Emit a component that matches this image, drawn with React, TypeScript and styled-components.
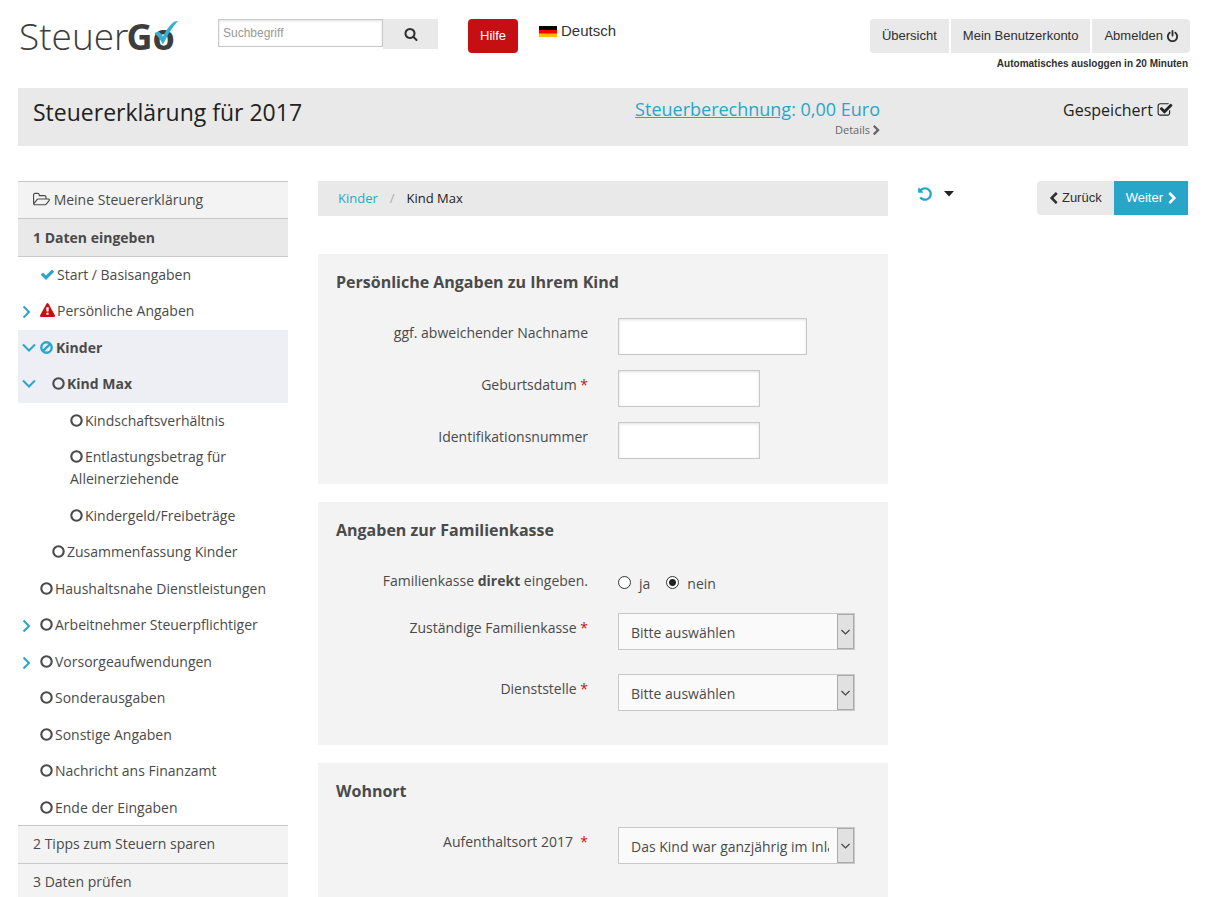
import React from 'react';
import styled, { createGlobalStyle, css } from 'styled-components';

const blue = '#2aa5ca';
const dark = '#2f2f2f';
const text = '#4a4a4a';
const sans = '"Liberation Sans", Arial, sans-serif';
const open = '"Open Sans", sans-serif';

const GlobalStyle = createGlobalStyle`
  *, *::before, *::after { box-sizing: border-box; }
  body { margin: 0; background: #fff; color: ${text}; font: 14px/22px ${open}; }
  a { color: inherit; text-decoration: none; }
  button, input, select { font: inherit; color: inherit; margin: 0; }
  ul, ol { list-style: none; margin: 0; padding: 0; }
  h1, h2, p { margin: 0; }
`;

/* ---------- icons ---------- */

const paths = {
  search: 'M1216 832q0-185-131.5-316.5t-316.5-131.5-316.5 131.5-131.5 316.5 131.5 316.5 316.5 131.5 316.5-131.5 131.5-316.5zm512 832q0 52-38 90t-90 38q-54 0-90-38l-343-342q-179 124-399 124-143 0-273.5-55.5t-225-150-150-225-55.5-273.5 55.5-273.5 150-225 225-150 273.5-55.5 273.5 55.5 225 150 150 225 55.5 273.5q0 220-124 399l343 343q37 37 37 90z',
  check: 'M1671 566q0 40-28 68l-724 724-136 136q-28 28-68 28t-68-28l-136-136-362-362q-28-28-28-68t28-68l136-136q28-28 68-28t68 28l294 295 656-657q28-28 68-28t68 28l136 136q28 28 28 68z',
  saved: 'M1472 930v318q0 119-84.5 203.5t-203.5 84.5h-832q-119 0-203.5-84.5t-84.5-203.5v-832q0-119 84.5-203.5t203.5-84.5h832q63 0 117 25 15 7 18 23 3 17-9 29l-49 49q-10 10-23 10-3 0-9-2-23-6-45-6h-832q-66 0-113 47t-47 113v832q0 66 47 113t113 47h832q66 0 113-47t47-113v-254q0-13 9-22l64-64q10-10 23-10 6 0 12 3 20 8 20 29zm231-489l-814 814q-24 24-57 24t-57-24l-430-430q-24-24-24-57t24-57l110-110q24-24 57-24t57 24l263 263 647-647q24-24 57-24t57 24l110 110q24 24 24 57t-24 57z',
  undo: 'M1664 896q0 156-61 298t-164 245-245 164-298 61q-172 0-327-72.5t-264-204.5q-7-10-6.5-22.5t8.5-20.5l137-138q10-9 25-9 16 2 23 12 73 95 179 147t225 52q104 0 198.5-40.5t163.5-109.5 109.5-163.5 40.5-198.5-40.5-198.5-109.5-163.5-163.5-109.5-198.5-40.5q-98 0-188 35.5t-160 101.5l137 138q31 30 14 69-17 40-59 40h-448q-26 0-45-19t-19-45v-448q0-42 40-59 39-17 69 14l130 129q107-101 244.5-156.5t284.5-55.5q156 0 298 61t245 164 164 245 61 298z',
  power: 'M1664 896q0 156-61 298t-164 245-245 164-298 61-298-61-245-164-164-245-61-298q0-182 80.5-343t226.5-270q43-32 95.5-25t83.5 50q32 42 24.5 94.5t-49.5 84.5q-98 74-151.5 181t-53.5 228q0 104 40.5 198.5t109.5 163.5 163.5 109.5 198.5 40.5 198.5-40.5 163.5-109.5 109.5-163.5 40.5-198.5q0-121-53.5-228t-151.5-181q-42-32-49.5-84.5t24.5-94.5q31-43 84-50t95 25q146 109 226.5 270t80.5 343zm-640-768v640q0 52-38 90t-90 38-90-38-38-90v-640q0-52 38-90t90-38 90 38 38 90z',
  warning: 'M1024 1375v-190q0-14-9.5-23.5t-22.5-9.5h-192q-13 0-22.5 9.5t-9.5 23.5v190q0 14 9.5 23.5t22.5 9.5h192q13 0 22.5-9.5t9.5-23.5zm-2-374l18-459q0-12-10-19-13-11-24-11h-220q-11 0-24 11-10 7-10 21l17 457q0 10 10 16.5t24 6.5h185q14 0 23.5-6.5t10.5-16.5zm-14-934l768 1408q35 63-2 126-17 29-46.5 46t-63.5 17h-1536q-34 0-63.5-17t-46.5-46q-37-63-2-126l768-1408q17-31 47-49t65-18 65 18 47 49z',
  right: 'M1363 877l-742 742q-19 19-45 19t-45-19l-166-166q-19-19-19-45t19-45l531-531-531-531q-19-19-19-45t19-45l166-166q19-19 45-19t45 19l742 742q19 19 19 45t-19 45z',
  left: 'M1427 301l-531 531 531 531q19 19 19 45t-19 45l-166 166q-19 19-45 19t-45-19l-742-742q-19-19-19-45t19-45l742-742q19-19 45-19t45 19l166 166q19 19 19 45t-19 45z',
  folder: 'M1781 1000q0-35-53-35h-1088q-40 0-85.5 21.5t-71.5 52.5l-294 363q-18 24-18 40 0 35 53 35h1088q40 0 86-22t71-53l294-363q18-22 18-39zm-1141-163h768v-160q0-40-28-68t-68-28h-576q-40 0-68-28t-28-68v-64q0-40-28-68t-68-28h-320q-40 0-68 28t-28 68v853l256-315q44-53 116-87.5t140-34.5zm1269 163q0 62-46 120l-295 363q-43 53-116 87.5t-140 34.5h-1088q-92 0-158-66t-66-158v-960q0-92 66-158t158-66h320q92 0 158 66t66 158v32h544q92 0 158 66t66 158v160h192q54 0 99 24.5t67 70.5q15 32 15 68z',
};

const Glyph = styled.svg`
  flex: none;
  fill: currentColor;
  vertical-align: -2px;
`;

type IconProps = { name: keyof typeof paths; size?: number; box?: string };

function Icon({ name, size = 14, box = '0 0 1792 1792' }: IconProps) {
  const [, , w, h] = box.split(' ').map(Number);
  return (
    <Glyph width={Math.round((size * w) / h)} height={size} viewBox={box} aria-hidden="true">
      <path d={paths[name]} />
    </Glyph>
  );
}

const StrokeGlyph = styled.svg`
  flex: none;
  fill: none;
  stroke: currentColor;
  vertical-align: -1px;
`;

const Ring = ({ barred = false }: { barred?: boolean }) => (
  <StrokeGlyph width="13" height="13" viewBox="0 0 13 13" strokeWidth={barred ? 2.4 : 2.1} aria-hidden="true">
    <circle cx="6.5" cy="6.5" r="5.2" />
    {barred && <path d="M2.8 10.2 10.2 2.8" />}
  </StrokeGlyph>
);

/* ---------- header ---------- */

const Page = styled.div`
  max-width: 1206px;
  margin: 0 auto;
  padding: 0 18px;
`;

const Header = styled.header`
  display: flex;
  align-items: flex-start;
  height: 88px;
  padding-top: 19px;
  color: ${dark};
  font: 13px/20px ${sans};
`;

const Logo = styled.a`
  position: relative;
  width: 200px;
  height: 36px;
  padding-left: 1px;
  color: #3e3d3d;
  font: 300 37px/34px ${open};
  b { margin-left: -2px; font-size: 36px; font-weight: 700; }
  svg { position: absolute; left: 136px; top: 2px; }
`;

const Search = styled.form`
  display: flex;
  align-items: flex-start;
`;

const SearchInput = styled.input`
  width: 165px;
  height: 28px;
  padding: 0 4px;
  border: 1px solid #c8c8c8;
  border-radius: 0;
  background: #fff;
  box-shadow: inset 0 1px 3px rgba(0, 0, 0, 0.12);
  font-size: 12px;
  &::placeholder { color: #999; opacity: 1; }
`;

const SearchButton = styled.button`
  width: 55px;
  height: 30px;
  padding: 2px 0 0;
  border: 0;
  background: #e9e9e9;
`;

const HelpButton = styled.button`
  height: 34px;
  margin-left: 30px;
  padding: 0 12px;
  border: 0;
  border-radius: 4px;
  background: #c60f13;
  color: #fff;
`;

const Language = styled.a`
  display: flex;
  align-items: center;
  gap: 4px;
  margin-left: 21px;
  padding-top: 2px;
  color: #333;
  font-size: 15px;
`;

const Account = styled.div`
  margin: 0 -2px 0 auto;
`;

const AccountNav = styled.nav`
  display: flex;
  gap: 2px;
  a {
    display: flex;
    align-items: center;
    gap: 3px;
    height: 34px;
    padding: 0 12px;
    background: #e9e9e9;
  }
  a:first-child { border-radius: 4px 0 0 4px; }
  a:last-child { padding-right: 11px; border-radius: 0 4px 4px 0; }
`;

const Logout = styled.p`
  padding: 1px 2px 0 0;
  text-align: right;
  font-size: 10px;
  font-weight: 700;
`;

/* ---------- title bar ---------- */

const TitleBar = styled.section`
  display: grid;
  grid-template-columns: minmax(0, 1fr) auto 293px;
  align-items: start;
  height: 58px;
  padding: 0 15px;
  background: #e9e9e9;
  color: #222;
`;

const Title = styled.h1`
  font-size: 23px;
  font-weight: 400;
  line-height: 48px;
`;

const Tax = styled.div`
  padding-top: 10px;
  color: ${blue};
  font-size: 18px;
  text-align: right;
  a:first-child { text-decoration: underline; }
`;

const Details = styled.a`
  display: flex;
  justify-content: flex-end;
  align-items: center;
  gap: 1px;
  margin-right: -2px;
  color: #666;
  font-size: 11px;
  line-height: 20px;
`;

const Saved = styled.p`
  padding-top: 11px;
  font-size: 16px;
  text-align: right;
`;

/* ---------- columns ---------- */

const Columns = styled.div`
  display: grid;
  grid-template-columns: 270px minmax(0, 1fr) 270px;
  gap: 30px;
  align-items: start;
  padding-top: 35px;
`;

const Section = styled.a<{ $active?: boolean; $first?: boolean }>`
  display: block;
  padding: 7px 15px ${p => (p.$first ? 7 : 8)}px;
  border-top: 1px solid #c8c8c8;
  background: #f3f3f3;
  ${p => p.$active && css`
    padding: 8px 15px 7px;
    border-bottom: 1px solid #c8c8c8;
    background: #e9e9e9;
    font-weight: 700;
  `}
`;

const indents = [22, 34, 52];

const Item = styled.li<{ $level: number; $active?: boolean }>`
  position: relative;
  padding: 7px 15px 7px ${p => indents[p.$level]}px;
  ${p => p.$active && css`
    background: #edeff4;
    font-weight: 700;
  `}
  &:nth-child(even) { padding-bottom: 8px; }
  &:last-child { padding-bottom: 6px; }
`;

const Toggle = styled.button`
  position: absolute;
  left: 4px;
  top: 11px;
  display: flex;
  padding: 0;
  border: 0;
  background: none;
  color: ${blue};
`;

const Mark = styled.span<{ $color?: string; $gap: number }>`
  margin-right: ${p => p.$gap}px;
  color: ${p => p.$color ?? 'inherit'};
`;

/* ---------- form ---------- */

const Breadcrumb = styled.nav`
  margin-bottom: 38px;
  padding: 0 20px;
  background: #e9e9e9;
  color: #222;
  font-size: 13px;
  line-height: 35px;
  a { color: ${blue}; }
  span { margin: 0 12px; color: #aaa; }
`;

const Panel = styled.section`
  margin-bottom: 18px;
  padding: 17px 18px 10px;
  background: #f3f3f3;
  h2 { margin-bottom: 25px; font-size: 16px; line-height: 22px; }
`;

const Field = styled.div<{ $select?: boolean }>`
  display: grid;
  grid-template-columns: 252px minmax(0, 1fr);
  gap: 30px;
  min-height: 32px;
  margin-bottom: 15px;
  padding-bottom: ${p => (p.$select ? 9 : 0)}px;
`;

const Label = styled.label`
  padding-top: 4px;
  text-align: right;
  i { color: #c60f13; font-style: normal; }
`;

const TextInput = styled.input<{ $wide?: boolean }>`
  width: ${p => (p.$wide ? 189 : 142)}px;
  height: 37px;
  padding: 0 12px;
  border: 1px solid #c8c8c8;
  border-radius: 0;
  background: #fff;
  box-shadow: inset 0 1px 3px rgba(0, 0, 0, 0.12);
`;

const Radios = styled.div`
  display: flex;
  padding-top: 7px;
  label { display: flex; gap: 8px; margin-right: 16px; }
  input {
    appearance: none;
    width: 13px;
    height: 13px;
    margin-top: 3px;
    border: 1px solid #333;
    border-radius: 50%;
    background: #fff;
  }
  input:checked {
    border-color: #333;
    background: radial-gradient(circle, #222 0 3px, #fff 4px);
  }
`;

const SelectBox = styled.div`
  position: relative;
  width: 237px;
  height: 37px;
  select {
    appearance: none;
    width: 100%;
    height: 100%;
    padding: 2px 25px 0 12px;
    border: 1px solid #c8c8c8;
    border-radius: 0;
    background: #fafafa;
    text-overflow: clip;
  }
  svg {
    position: absolute;
    right: 1px;
    top: 1px;
    width: 17px;
    height: 35px;
    border: 1px solid #aaa;
    background: #e1e1e1;
    pointer-events: none;
  }
`;

const Tools = styled.aside`
  display: flex;
  align-items: flex-start;
  justify-content: space-between;
`;

const Undo = styled.button`
  display: flex;
  align-items: center;
  gap: 11px;
  height: 26px;
  margin-left: -1px;
  padding: 0;
  border: 0;
  background: none;
  color: ${blue};
`;

const Steps = styled.div`
  display: flex;
`;

const Step = styled.button<{ $primary?: boolean }>`
  display: flex;
  align-items: center;
  gap: ${p => (p.$primary ? 3 : 2)}px;
  height: 34px;
  padding: 0 ${p => (p.$primary ? 9 : 12)}px 0 ${p => (p.$primary ? 12 : 10)}px;
  border: 0;
  border-radius: ${p => (p.$primary ? '0' : '4px 0 0 4px')};
  background: ${p => (p.$primary ? blue : '#e9e9e9')};
  color: ${p => (p.$primary ? '#fff' : dark)};
  font: 13px/20px ${sans};
`;

type Entry = {
  label: string;
  level?: number;
  icon?: 'check' | 'warning' | 'ban';
  toggle?: 'open' | 'closed';
  active?: boolean;
};

const entries: Entry[] = [
  { label: 'Start / Basisangaben', icon: 'check' },
  { label: 'Persönliche Angaben', icon: 'warning', toggle: 'closed' },
  { label: 'Kinder', icon: 'ban', toggle: 'open', active: true },
  { label: 'Kind Max', level: 1, toggle: 'open', active: true },
  { label: 'Kindschaftsverhältnis', level: 2 },
  { label: 'Entlastungsbetrag für Alleinerziehende', level: 2 },
  { label: 'Kindergeld/Freibeträge', level: 2 },
  { label: 'Zusammenfassung Kinder', level: 1 },
  { label: 'Haushaltsnahe Dienstleistungen' },
  { label: 'Arbeitnehmer Steuerpflichtiger', toggle: 'closed' },
  { label: 'Vorsorgeaufwendungen', toggle: 'closed' },
  { label: 'Sonderausgaben' },
  { label: 'Sonstige Angaben' },
  { label: 'Nachricht ans Finanzamt' },
  { label: 'Ende der Eingaben' },
];

function EntryMark({ icon }: { icon?: Entry['icon'] }) {
  if (icon === 'check') return <Mark $color={blue} $gap={2}><Icon name="check" size={15} /></Mark>;
  if (icon === 'warning') return <Mark $color="#c60f13" $gap={2}><Icon name="warning" size={15} /></Mark>;
  if (icon === 'ban') return <Mark $color={blue} $gap={3}><Ring barred /></Mark>;
  return <Mark $gap={2}><Ring /></Mark>;
}

function Select({ id, label, value }: { id: string; label: string; value: string }) {
  return (
    <Field $select>
      <Label htmlFor={id}>{label} <i>*</i></Label>
      <SelectBox>
        <select id={id}><option>{value}</option></select>
        <svg viewBox="0 0 15 33" fill="none" stroke="#444" strokeWidth="1.2" aria-hidden="true">
          <path d="M3.5 15 7.5 19 11.5 15" />
        </svg>
      </SelectBox>
    </Field>
  );
}

export default function App() {
  return (
    <Page>
      <GlobalStyle />
      <Header>
        <Logo href="#" aria-label="SteuerGo">
          Steuer<b>Go</b>
          <svg width="24" height="24" viewBox="0 0 24 24" aria-hidden="true">
            <path d="M0.500 12 4.500 10.500Q7.500 12.500 9 15.500Q14 5 20.500 0.500L24 0Q15.500 9 9 23.500Q5.500 16.500 0.500 12Z" fill="#33b0d3" />
          </svg>
        </Logo>
        <Search>
          <SearchInput type="text" placeholder="Suchbegriff" aria-label="Suchbegriff" />
          <SearchButton type="button" aria-label="Suchen"><Icon name="search" size={14} /></SearchButton>
        </Search>
        <HelpButton type="button">Hilfe</HelpButton>
        <Language href="#">
          <svg width="18" height="11" viewBox="0 0 18 11" aria-hidden="true">
            <path d="M0 0h18v4H0z" fill="#000" />
            <path d="M0 4h18v4H0z" fill="#f00" />
            <path d="M0 7.500h18V11H0z" fill="#fb0" />
          </svg>
          Deutsch
        </Language>
        <Account>
          <AccountNav>
            <a href="#">Übersicht</a>
            <a href="#">Mein Benutzerkonto</a>
            <a href="#">Abmelden <Icon name="power" size={13} /></a>
          </AccountNav>
          <Logout>Automatisches ausloggen in 20 Minuten</Logout>
        </Account>
      </Header>

      <TitleBar>
        <Title>Steuererklärung für 2017</Title>
        <Tax>
          <a href="#">Steuerberechnung</a>: 0,00 Euro
          <Details href="#">Details <Icon name="right" size={11} /></Details>
        </Tax>
        <Saved>Gespeichert <Icon name="saved" size={16} /></Saved>
      </TitleBar>

      <Columns>
        <nav aria-label="Steuererklärung">
          <Section href="#" $first><Icon name="folder" size={16} box="0 0 1920 1792" /> Meine Steuererklärung</Section>
          <Section href="#" $active>1 Daten eingeben</Section>
          <ul>
            {entries.map(e => (
              <Item key={e.label} $level={e.level ?? 0} $active={e.active}>
                {e.toggle && (
                  <Toggle type="button" aria-label={e.label} aria-expanded={e.toggle === 'open'}>
                    <StrokeGlyph width="14" height="14" viewBox="0 0 14 14" strokeWidth="2" aria-hidden="true">
                      <path d={e.toggle === 'open' ? 'M1 3.500 7 9.500 13 3.500' : 'M1.500 2.500 7 8 1.500 13.500'} />
                    </StrokeGlyph>
                  </Toggle>
                )}
                <a href="#"><EntryMark icon={e.icon} />{e.label}</a>
              </Item>
            ))}
          </ul>
          <Section href="#">2 Tipps zum Steuern sparen</Section>
          <Section href="#">3 Daten prüfen</Section>
        </nav>

        <main>
          <Breadcrumb aria-label="Pfad"><a href="#">Kinder</a><span>/</span>Kind Max</Breadcrumb>

          <Panel>
            <h2>Persönliche Angaben zu Ihrem Kind</h2>
            <Field>
              <Label htmlFor="nachname">ggf. abweichender Nachname</Label>
              <TextInput id="nachname" $wide />
            </Field>
            <Field>
              <Label htmlFor="geburt">Geburtsdatum <i>*</i></Label>
              <TextInput id="geburt" />
            </Field>
            <Field>
              <Label htmlFor="idnr">Identifikationsnummer</Label>
              <TextInput id="idnr" />
            </Field>
          </Panel>

          <Panel>
            <h2>Angaben zur Familienkasse</h2>
            <Field>
              <Label as="span" id="direkt">Familienkasse <b>direkt</b> eingeben.</Label>
              <Radios role="radiogroup" aria-labelledby="direkt">
                <label><input type="radio" name="direkt" />ja</label>
                <label><input type="radio" name="direkt" defaultChecked />nein</label>
              </Radios>
            </Field>
            <Select id="kasse" label="Zuständige Familienkasse" value="Bitte auswählen" />
            <Select id="stelle" label="Dienststelle" value="Bitte auswählen" />
          </Panel>

          <Panel>
            <h2>Wohnort</h2>
            <Select id="ort" label={'Aufenthaltsort 2017\u00a0'} value="Das Kind war ganzjährig im Inland" />
          </Panel>
        </main>

        <Tools>
          <Undo type="button" aria-label="Rückgängig">
            <Icon name="undo" size={16} />
            <svg width="10" height="6" viewBox="0 0 10 6" aria-hidden="true"><path d="M0 0h10L5 5.500z" fill="#222" /></svg>
          </Undo>
          <Steps>
            <Step type="button"><Icon name="left" size={13} />Zurück</Step>
            <Step type="button" $primary>Weiter <Icon name="right" size={13} /></Step>
          </Steps>
        </Tools>
      </Columns>
    </Page>
  );
}
